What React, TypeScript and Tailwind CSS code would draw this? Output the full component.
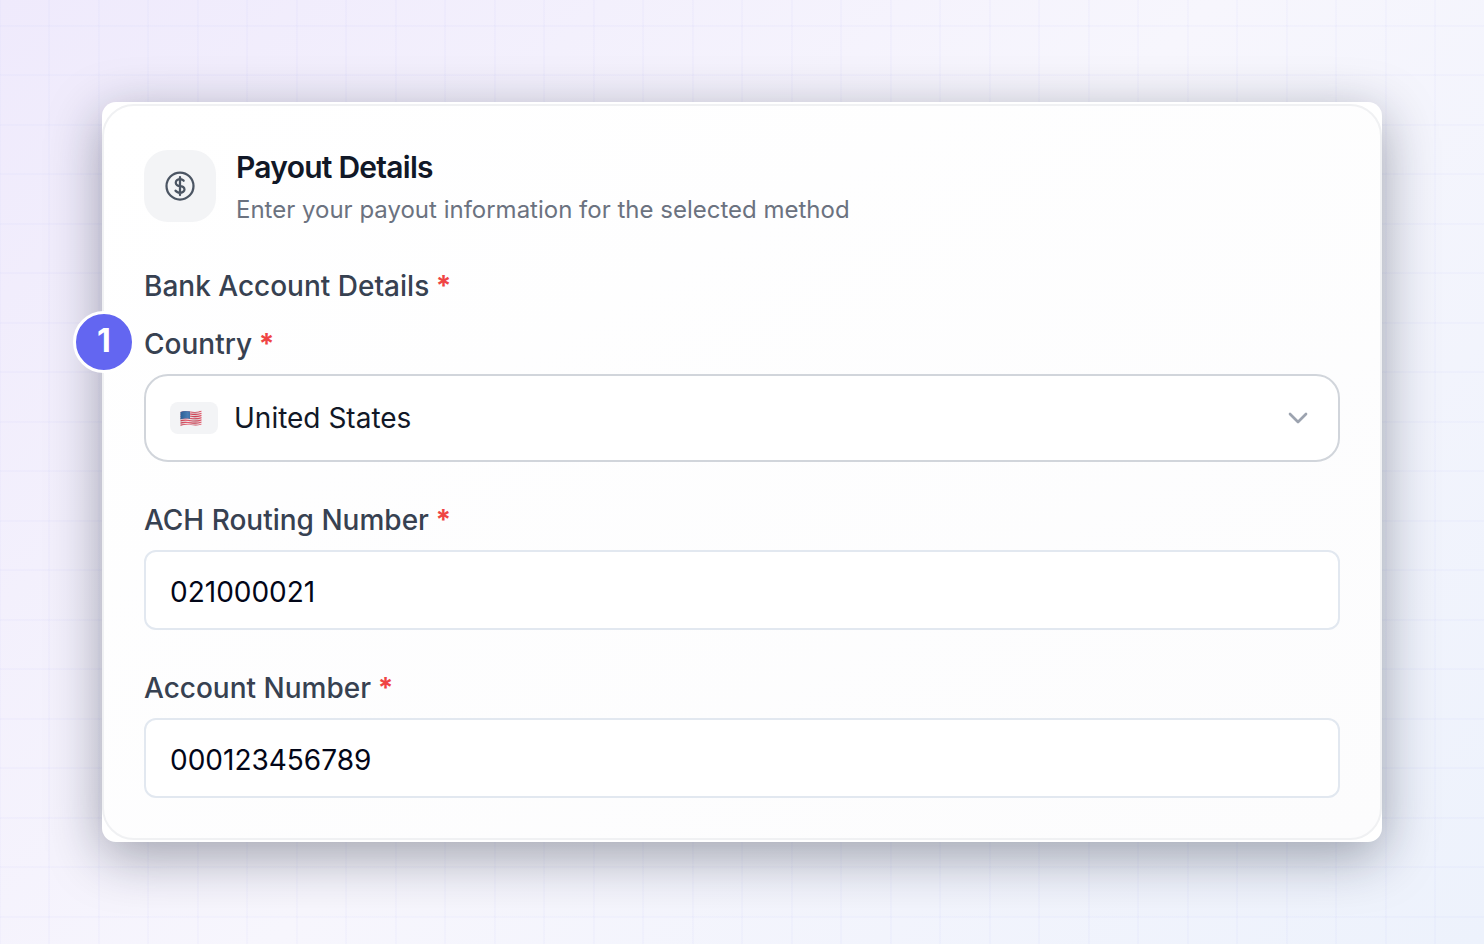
import { useState } from 'react';
import type { ReactNode } from 'react';
import { ChevronDown } from 'lucide-react';
import { HiOutlineCurrencyDollar } from 'react-icons/hi2';

function Required() {
  return <span className="font-bold text-[#ef4444]"> *</span>;
}

function FieldLabel({ htmlFor, children }: { htmlFor: string; children: ReactNode }) {
  return (
    <label htmlFor={htmlFor} className="block text-[28px] leading-7 font-medium text-[#374151]">
      {children}
      <Required />
    </label>
  );
}

function UsFlag() {
  return (
    <svg viewBox="0 0 22 17" className="h-[17px] w-[22px]" aria-hidden="true">
      <defs>
        <clipPath id="flag-shape">
          <path d="M0.5 2C4 .6 7 .9 11 1.6S18 2 21.5.6V14.4C18 15.8 15 15.6 11 15S4 14.6.5 16.2Z" />
        </clipPath>
        <linearGradient id="flag-shade" x1="0" x2="1" y1="0" y2="0">
          <stop offset="0" stopColor="#000" stopOpacity=".12" />
          <stop offset=".35" stopColor="#fff" stopOpacity=".12" />
          <stop offset=".7" stopColor="#000" stopOpacity=".1" />
          <stop offset="1" stopColor="#fff" stopOpacity=".1" />
        </linearGradient>
      </defs>
      <g clipPath="url(#flag-shape)">
        <rect width="22" height="17" fill="#f3e6e9" />
        {[0, 1, 2, 3, 4, 5, 6].map((i) => (
          <path
            key={i}
            d={`M0 ${2.1 + i * 2.2}C4 ${0.9 + i * 2.2} 7 ${1.2 + i * 2.2} 11 ${1.9 + i * 2.2}S18 ${2.2 + i * 2.2} 22 ${1 + i * 2.2}`}
            fill="none"
            stroke="#e0475c"
            strokeWidth="1.15"
          />
        ))}
        <path d="M0 0H10V9C7 8.4 4 8.3 0 9.6Z" fill="#2f6aa8" />
        <rect width="22" height="17" fill="url(#flag-shade)" />
      </g>
    </svg>
  );
}

function TextField({ id, label, initial }: { id: string; label: string; initial: string }) {
  const [value, setValue] = useState(initial);
  return (
    <div className="flex flex-col gap-4">
      <FieldLabel htmlFor={id}>{label}</FieldLabel>
      <input
        id={id}
        type="text"
        inputMode="numeric"
        value={value}
        onChange={(e) => setValue(e.target.value)}
        className="h-20 w-full rounded-xl border-2 border-slate-200 bg-white px-6 pt-1 text-[28px] text-slate-950 outline-none focus:border-indigo-400"
      />
    </div>
  );
}

function CountryField() {
  return (
    <div className="relative flex flex-col gap-4">
      <span className="absolute -top-[19px] -left-[71px] flex size-[62px] items-center justify-center rounded-full border-3 border-white bg-[#6366f1] pb-0.5 text-[32px] leading-8 font-bold text-white">
        1
      </span>
      <FieldLabel htmlFor="country">Country</FieldLabel>
      <div className="relative">
        <select
          id="country"
          className="h-[88px] w-full appearance-none rounded-3xl border-2 border-[#d1d5db] bg-white pr-20 pl-[88px] text-[28px] text-[#111827] outline-none focus:border-indigo-400"
        >
          <option>United States</option>
        </select>
        <span className="pointer-events-none absolute inset-y-0 left-[26px] flex items-center">
          <span className="flex h-8 w-12 items-center rounded-lg bg-gray-100 pl-2.5">
            <UsFlag />
          </span>
        </span>
        <span className="pointer-events-none absolute inset-y-0 right-[26px] flex items-center">
          <ChevronDown className="size-8 text-[#9ca3af]" aria-hidden="true" />
        </span>
      </div>
    </div>
  );
}

export default function App() {
  return (
    <div className="bg-[linear-gradient(135deg,#efeafc_0%,#f7f6fd_50%,#edf2fc_100%)] font-['Inter',sans-serif]">
      <main className="flex min-h-screen w-full items-center bg-[linear-gradient(90deg,#6366f107_2px,transparent_2px,transparent_49px,#6366f107_49px,#6366f107_51px,transparent_51px),linear-gradient(180deg,#6366f107_2px,transparent_2px,transparent_49px,#6366f107_49px,#6366f107_51px,transparent_51px)] bg-size-[99px_99px] bg-position-[-1px_25px] p-[102px]">
        <div className="w-full rounded-[14px] bg-white py-0.5 shadow-[0_14px_54px_rgba(15,23,42,0.38)]">
          <form className="rounded-4xl border-2 border-[#f0f1f3] bg-linear-to-br from-white to-[#fcfcfd] px-10 pt-11 pb-10">
            <header className="flex items-start gap-5">
              <div className="flex size-[72px] items-center justify-center rounded-3xl bg-gray-100">
                <HiOutlineCurrencyDollar className="size-9 text-[#4b5563]" aria-hidden="true" />
              </div>
              <div className="flex flex-col gap-3">
                <h1 className="text-3xl leading-[34px] font-semibold tracking-tight text-[#111827]">Payout Details</h1>
                <p className="text-2xl leading-7 text-[#6b7280]">Enter your payout information for the selected method</p>
              </div>
            </header>
            <h2 className="mt-12 text-[28px] leading-7 font-medium text-[#374151]">
              Bank Account Details
              <Required />
            </h2>
            <div className="mt-[30px] flex flex-col gap-11">
              <CountryField />
              <TextField id="routing" label="ACH Routing Number" initial="021000021" />
              <TextField id="account" label="Account Number" initial="000123456789" />
            </div>
          </form>
        </div>
      </main>
    </div>
  );
}
